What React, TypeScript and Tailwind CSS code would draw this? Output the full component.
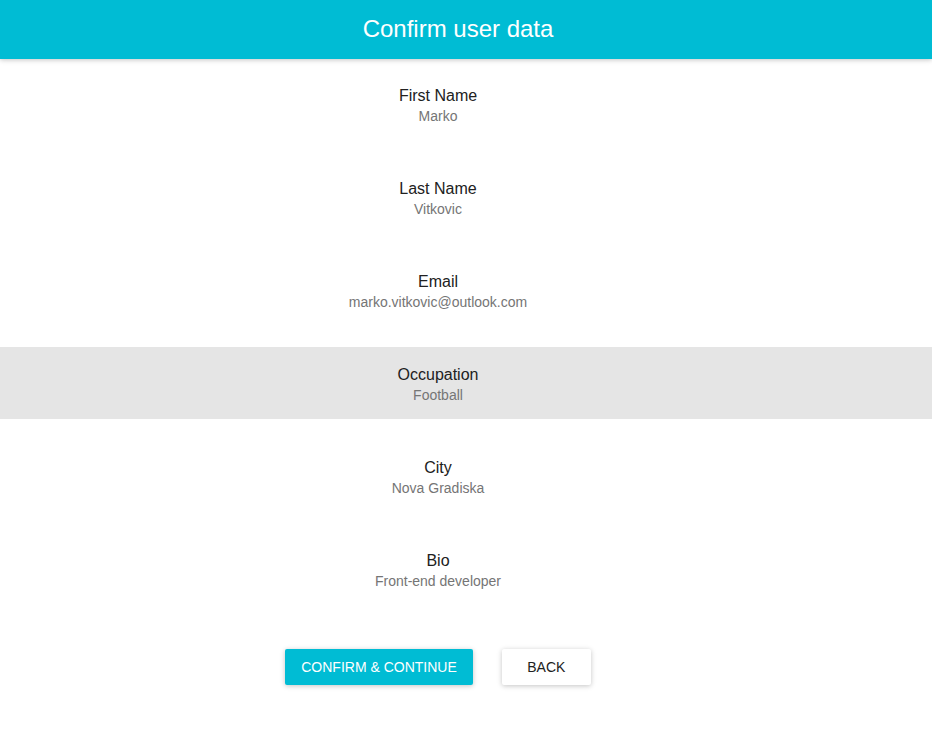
import React from "react";

const items = [
  { label: "First Name", value: "Marko" },
  { label: "Last Name", value: "Vitkovic" },
  { label: "Email", value: "marko.vitkovic@outlook.com" },
  { label: "Occupation", value: "Football", active: true },
  { label: "City", value: "Nova Gradiska" },
  { label: "Bio", value: "Front-end developer" },
];

export default function App() {
  return (
    <div className="min-h-[737px] bg-white" style={{ fontFamily: '"Liberation Sans", Arial, sans-serif' }}>
      <header className="h-[59px] bg-[#00bcd4] flex items-center justify-center pl-6 pr-10 pb-[2px] shadow-[0_1px_6px_rgba(0,0,0,0.12),0_1px_4px_rgba(0,0,0,0.12)] relative z-10">
        <h1 className="text-[24px] text-white leading-none">Confirm user data</h1>
      </header>
      <main className="pt-[9px]">
        <ul className="flex flex-col gap-[21px]">
          {items.map((it) => (
            <li
              key={it.label}
              className={`h-[72px] pl-4 pr-[72px] pt-[18px] flex flex-col items-center ${it.active ? "bg-[#e5e5e5]" : ""}`}
            >
              <div className="text-[16px] leading-[20px] text-[#212121]">{it.label}</div>
              <div className="text-[14px] leading-[16px] mt-[2px] text-[#757575]">{it.value}</div>
            </li>
          ))}
        </ul>
        <div className="mt-[44px] flex justify-center pl-4 pr-[72px] gap-[29px]">
          <button className="h-[36px] px-4 min-w-[88px] rounded-[2px] bg-[#00bcd4] text-white text-[14px] uppercase shadow-[0_1px_6px_rgba(0,0,0,0.12),0_1px_4px_rgba(0,0,0,0.12)]">
            Confirm &amp; Continue
          </button>
          <button className="h-[36px] px-4 min-w-[89px] rounded-[2px] bg-white text-[#212121] text-[14px] uppercase shadow-[0_1px_6px_rgba(0,0,0,0.12),0_1px_4px_rgba(0,0,0,0.12)]">
            Back
          </button>
        </div>
      </main>
    </div>
  );
}
